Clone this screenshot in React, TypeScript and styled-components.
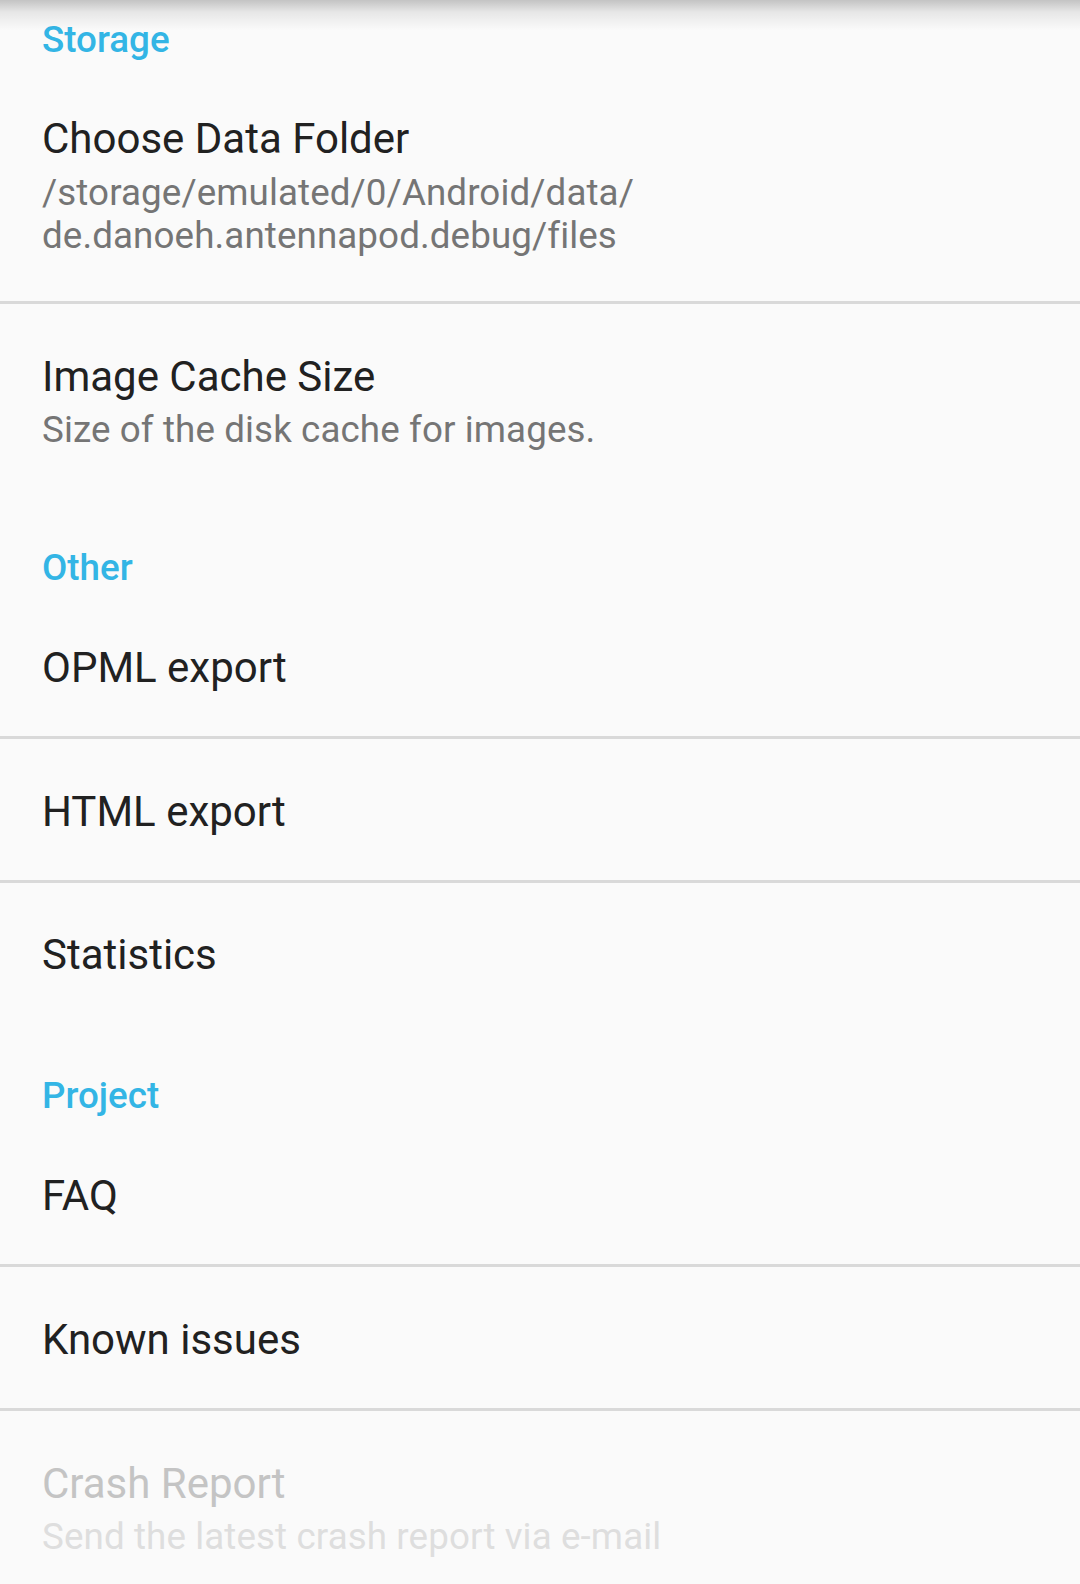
import React from "react";
import styled, { createGlobalStyle } from "styled-components";

const GlobalStyle = createGlobalStyle`
    html, body {
        margin: 0;
        padding: 0;
        background: #fafafa;
    }
    body {
        font-family: Roboto, "Noto Sans", "Liberation Sans", sans-serif;
        -webkit-font-smoothing: antialiased;
    }
`;

const Screen = styled.div`
    position: relative;
    width: 1080px;
    height: 1584px;
    overflow: hidden;
    background: #fafafa;
`;

// shadow cast by the toolbar above the scrolled list
const TopShadow = styled.div`
    position: absolute;
    top: 0;
    left: 0;
    right: 0;
    height: 30px;
    background: linear-gradient(
        to bottom,
        rgba(0, 0, 0, 0.22) 0%,
        rgba(0, 0, 0, 0.08) 40%,
        rgba(0, 0, 0, 0) 100%
    );
    pointer-events: none;
`;

const CategoryTitle = styled.div<{ $first?: boolean }>`
    padding: ${(p) => (p.$first ? "17.5px" : "51px")} 42px 6px;
    font-size: 36.75px;
    line-height: 43px;
    font-weight: 500;
    color: #33b5e5;
`;

const Row = styled.div<{ $divider?: boolean }>`
    padding: 47.75px 42px 44px;
    border-bottom: ${(p) => (p.$divider ? "3px solid #d9d9d9" : "none")};
`;

const Title = styled.div<{ $disabled?: boolean }>`
    font-size: 42px;
    line-height: 49px;
    color: ${(p) => (p.$disabled ? "#c4c4c4" : "#212121")};
`;

const Summary = styled.div<{ $disabled?: boolean }>`
    margin-top: 7.5px;
    font-size: 36.75px;
    line-height: 43px;
    letter-spacing: 0.1px;
    color: ${(p) => (p.$disabled ? "#dedede" : "#757575")};
`;

type Pref = {
    title: string;
    summary?: React.ReactNode;
    disabled?: boolean;
};

type Section = {
    name: string;
    items: Pref[];
};

const sections: Section[] = [
    {
        name: "Storage",
        items: [
            {
                title: "Choose Data Folder",
                summary: (
                    <>
                        /storage/emulated/0/Android/data/
                        <wbr />
                        de.danoeh.antennapod.debug/files
                    </>
                ),
            },
            {
                title: "Image Cache Size",
                summary: "Size of the disk cache for images.",
            },
        ],
    },
    {
        name: "Other",
        items: [
            { title: "OPML export" },
            { title: "HTML export" },
            { title: "Statistics" },
        ],
    },
    {
        name: "Project",
        items: [
            { title: "FAQ" },
            { title: "Known issues" },
            {
                title: "Crash Report",
                summary: "Send the latest crash report via e-mail",
                disabled: true,
            },
        ],
    },
];

const App: React.FC = () => {
    return (
        <>
            <GlobalStyle />
            <Screen>
                {sections.map((section, si) => (
                    <section key={section.name}>
                        <CategoryTitle $first={si === 0}>
                            {section.name}
                        </CategoryTitle>
                        {section.items.map((item, i) => (
                            <Row
                                key={item.title}
                                $divider={i < section.items.length - 1}
                            >
                                <Title $disabled={item.disabled}>
                                    {item.title}
                                </Title>
                                {item.summary && (
                                    <Summary $disabled={item.disabled}>
                                        {item.summary}
                                    </Summary>
                                )}
                            </Row>
                        ))}
                    </section>
                ))}
                <TopShadow />
            </Screen>
        </>
    );
};

export default App;
